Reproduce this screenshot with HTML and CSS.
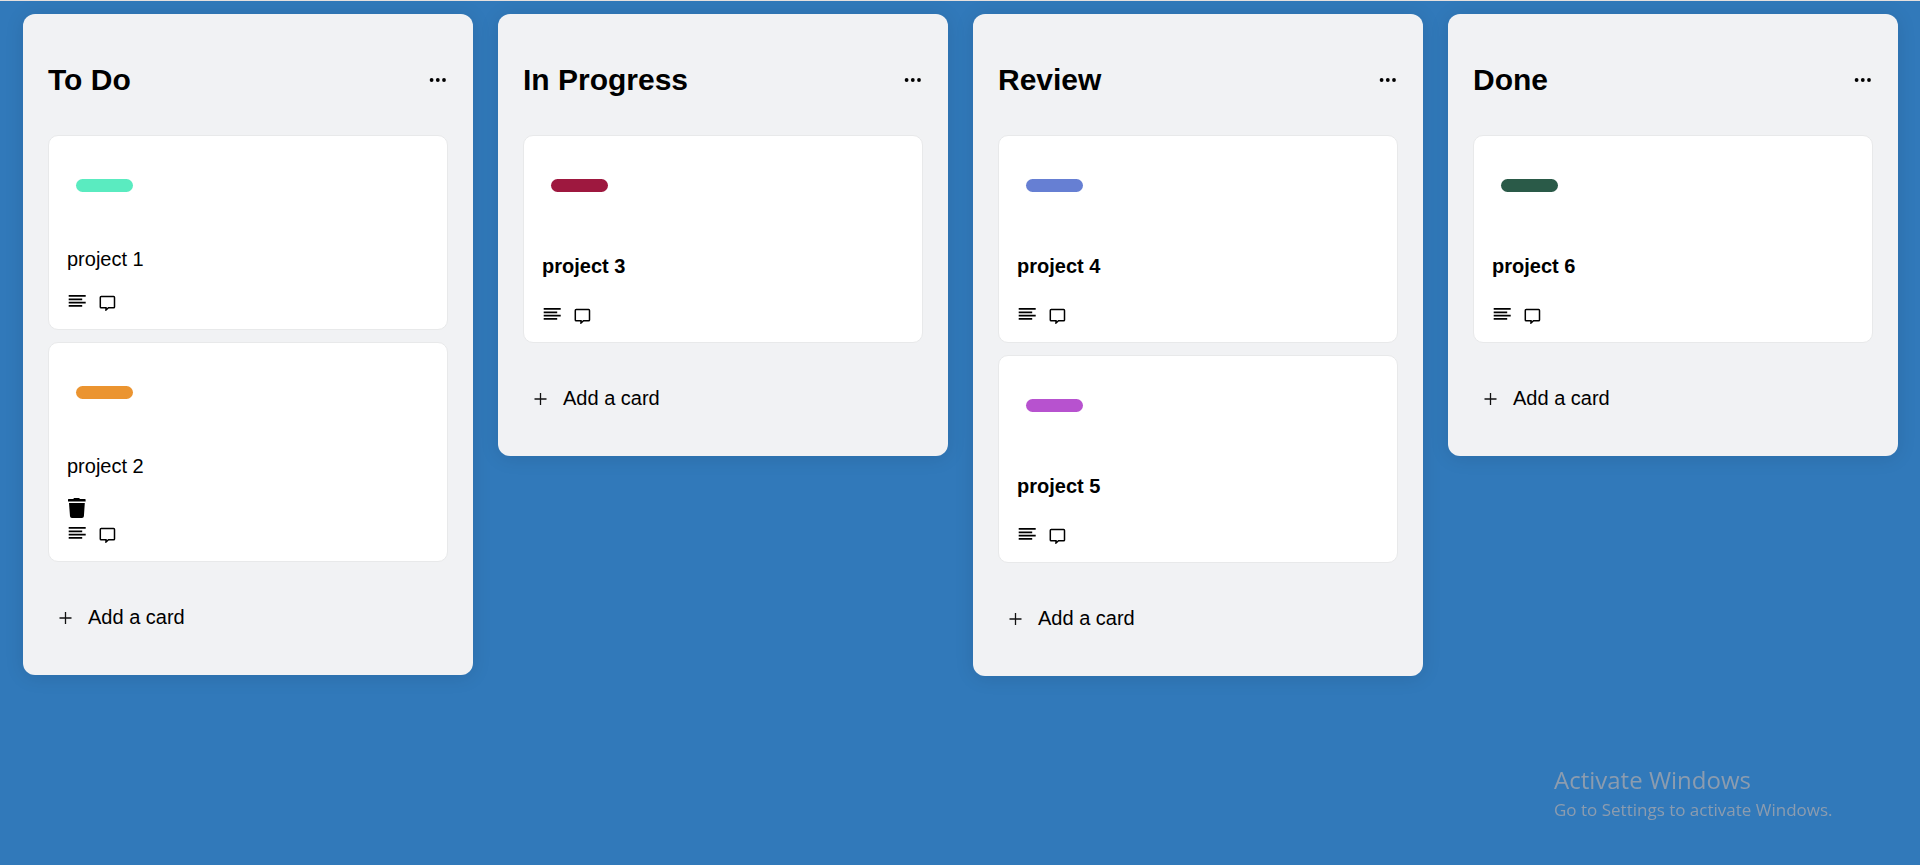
FILE: index.html
```html
<!DOCTYPE html>
<html lang="en">
<head>
<meta charset="utf-8">
<title>Board</title>
<link rel="stylesheet" href="styles.css">
</head>
<body>
<svg class="sprite" aria-hidden="true">
  <symbol id="dots" viewBox="0 0 20 20"><circle cx="3.600" cy="10" r="1.900"/><circle cx="9.800" cy="10" r="1.900"/><circle cx="16" cy="10" r="1.900"/></symbol>
  <symbol id="lines" viewBox="0 0 20 20"><path d="M1.700 4h17v1.800h-17zM1.700 7.500h13.500v1.700h-13.500zM1.700 10.700h17v1.700h-17zM1.700 14h13.500v1.800h-13.500z"/></symbol>
  <symbol id="message" viewBox="0 0 20 20"><path d="M3 5.500h12.600a.9.900 0 0 1 .9.900v9.500a.9.900 0 0 1-.9.900H10.500L8 19V16.800H3.200a.9.900 0 0 1-.9-.9V6.400a.9.900 0 0 1 .9-.9z" fill="none" stroke="#000" stroke-width="1.500"/></symbol>
  <symbol id="trash" viewBox="0 0 20 20"><path d="M7 0h5.200l.7 1H18a.6.600 0 0 1 .6.600v2H1v-2a.6.600 0 0 1 .6-.6h4.700zM2 5h15.800l-.9 13.200A2 2 0 0 1 14.900 20H5a2 2 0 0 1-2-1.800z"/></symbol>
  <symbol id="plus" viewBox="0 0 20 20"><path d="M9.500 4v12M3.500 10h12" fill="none" stroke="#111" stroke-width="1.300"/></symbol>
</svg>
<main class="board">
  <section class="column">
    <header class="column-header"><h2 class="column-title">To Do</h2><button class="icon-button" aria-label="To Do menu"><svg class="icon"><use href="#dots"/></svg></button></header>
    <div class="cards">
      <article class="card">
        <span class="label mint"></span>
        <p class="card-title">project 1</p>
        <div class="card-icons"><svg class="icon"><use href="#lines"/></svg><svg class="icon"><use href="#message"/></svg></div>
      </article>
      <article class="card">
        <span class="label orange"></span>
        <p class="card-title">project 2</p>
        <button class="icon-button delete" aria-label="Delete project 2"><svg class="icon"><use href="#trash"/></svg></button>
        <div class="card-icons compact"><svg class="icon"><use href="#lines"/></svg><svg class="icon"><use href="#message"/></svg></div>
      </article>
    </div>
    <button class="add"><svg class="icon"><use href="#plus"/></svg>Add a card</button>
  </section>
  <section class="column">
    <header class="column-header"><h2 class="column-title">In Progress</h2><button class="icon-button" aria-label="In Progress menu"><svg class="icon"><use href="#dots"/></svg></button></header>
    <div class="cards">
      <article class="card">
        <span class="label crimson"></span>
        <h4 class="card-title strong">project 3</h4>
        <div class="card-icons"><svg class="icon"><use href="#lines"/></svg><svg class="icon"><use href="#message"/></svg></div>
      </article>
    </div>
    <button class="add"><svg class="icon"><use href="#plus"/></svg>Add a card</button>
  </section>
  <section class="column">
    <header class="column-header"><h2 class="column-title">Review</h2><button class="icon-button" aria-label="Review menu"><svg class="icon"><use href="#dots"/></svg></button></header>
    <div class="cards">
      <article class="card">
        <span class="label blue"></span>
        <h4 class="card-title strong">project 4</h4>
        <div class="card-icons"><svg class="icon"><use href="#lines"/></svg><svg class="icon"><use href="#message"/></svg></div>
      </article>
      <article class="card">
        <span class="label purple"></span>
        <h4 class="card-title strong">project 5</h4>
        <div class="card-icons"><svg class="icon"><use href="#lines"/></svg><svg class="icon"><use href="#message"/></svg></div>
      </article>
    </div>
    <button class="add"><svg class="icon"><use href="#plus"/></svg>Add a card</button>
  </section>
  <section class="column">
    <header class="column-header"><h2 class="column-title">Done</h2><button class="icon-button" aria-label="Done menu"><svg class="icon"><use href="#dots"/></svg></button></header>
    <div class="cards">
      <article class="card">
        <span class="label green"></span>
        <h4 class="card-title strong">project 6</h4>
        <div class="card-icons"><svg class="icon"><use href="#lines"/></svg><svg class="icon"><use href="#message"/></svg></div>
      </article>
    </div>
    <button class="add"><svg class="icon"><use href="#plus"/></svg>Add a card</button>
  </section>
</main>
<aside class="watermark">
  <p class="watermark-title">Activate Windows</p>
  <p class="watermark-text">Go to Settings to activate Windows.</p>
</aside>
</body>
</html>
```
FILE: styles.css
```css
* { box-sizing: border-box; }

body {
  margin: 0;
  min-height: 100vh;
  border-top: 1px solid #e6e0de;
  background: #3179ba;
  color: #000;
  font: 20px/23px "Liberation Sans", Arial, sans-serif;
}

h2, h4, p { margin: 0; }

button {
  padding: 0;
  border: 0;
  background: none;
  color: inherit;
  font: inherit;
  cursor: pointer;
}

.sprite { display: none; }

.icon {
  display: block;
  flex: none;
  width: 20px;
  height: 20px;
}

.board {
  display: grid;
  grid-template-columns: repeat(4, minmax(0, 1fr));
  align-items: start;
  gap: 25px;
  padding: 13px 22px 25px 23px;
}

.column {
  padding: 25px;
  border-radius: 12px;
  background: #f1f2f4;
  box-shadow: 0 2px 19px rgba(0, 0, 0, 0.1);
}

.column-header {
  display: flex;
  align-items: center;
  justify-content: space-between;
  padding: 24px 0 38px;
}

.column-title {
  font-size: 30px;
  line-height: 34px;
}

.cards {
  display: grid;
  gap: 12px;
}

.card {
  padding: 43px 18px 16px;
  border: 1px solid #e8e9ea;
  border-radius: 10px;
  background: #fff;
}

.label {
  display: block;
  width: 57px;
  height: 13px;
  margin: 0 9px 56px;
  border-radius: 7px;
}

.mint { background: #5aebc0; }
.orange { background: #eb9430; }
.crimson { background: #9e183f; }
.blue { background: #667fd3; }
.purple { background: #b752cf; }
.green { background: #2a5a48; }

.card-title.strong {
  padding: 7px 0 6px;
  font-weight: 700;
}

.delete {
  display: block;
  margin-top: 20px;
}

.card-icons {
  display: flex;
  gap: 11px;
  padding: 20px 0 2px;
}

.card-icons.compact { padding-top: 5px; }

.add {
  display: flex;
  align-items: center;
  gap: 12px;
  margin: 20px 0 0;
  padding: 24px 8px 21px;
}

.watermark {
  position: fixed;
  right: 82px;
  bottom: 43px;
  width: 284px;
  color: #8c9caf;
  font-family: "Open Sans", "Noto Sans", sans-serif;
  white-space: nowrap;
  pointer-events: none;
}

.watermark-title {
  font-size: 24px;
  line-height: 36px;
}

.watermark-text {
  font-size: 17px;
  line-height: 24px;
}
```
